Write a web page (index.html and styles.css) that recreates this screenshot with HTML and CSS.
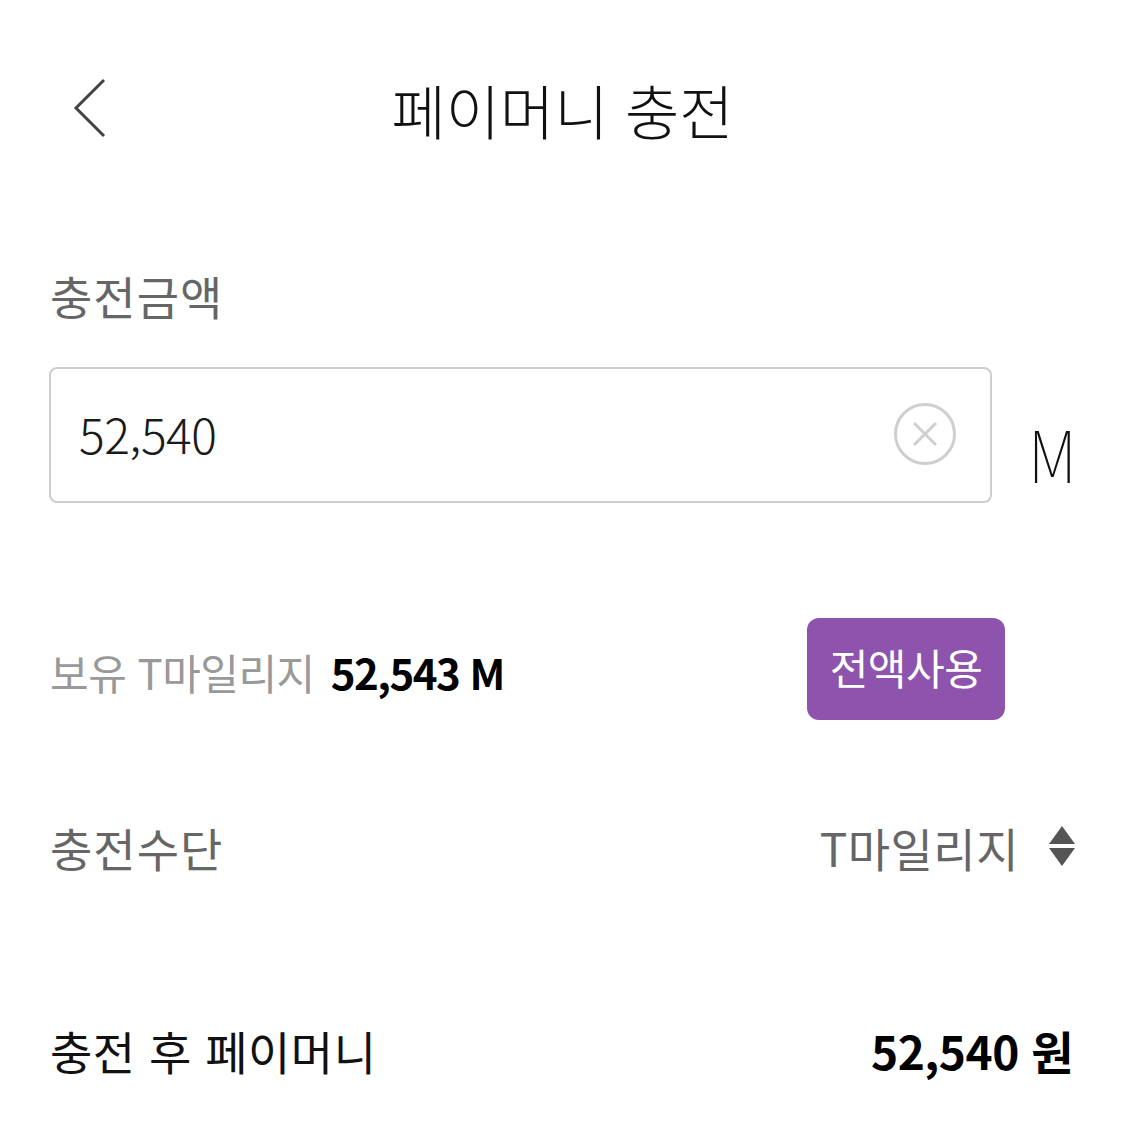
FILE: index.html
```html
<!DOCTYPE html>
<html lang="ko">
<head>
<meta charset="utf-8">
<title>페이머니 충전</title>
<link rel="stylesheet" href="styles.css">
</head>
<body>
<div class="page">
  <header class="header">
    <button class="back" aria-label="뒤로">
      <svg width="34" height="60" viewBox="0 0 34 60"><path d="M31 2 L3 30 L31 58" fill="none" stroke="#444" stroke-width="3"/></svg>
    </button>
    <h1 class="title">페이머니 충전</h1>
  </header>

  <section class="amount">
    <div class="label">충전금액</div>
    <div class="input-row">
      <div class="input-box">
        <span class="input-value">52,540</span>
        <svg class="clear" width="64" height="64" viewBox="0 0 64 64">
          <circle cx="32" cy="32" r="29.5" fill="none" stroke="#cfcfcf" stroke-width="3"/>
          <path d="M21 21 L43 43 M43 21 L21 43" stroke="#cfcfcf" stroke-width="3" fill="none"/>
        </svg>
      </div>
      <span class="unit">M</span>
    </div>
  </section>

  <section class="own-row">
    <div class="own">
      <span class="own-label">보유 T마일리지</span>
      <span class="own-value">52,543 M</span>
    </div>
    <button class="use-all">전액사용</button>
  </section>

  <section class="method-row">
    <span class="label">충전수단</span>
    <span class="method">
      <span class="method-name">T마일리지</span>
      <svg class="sort" width="26" height="42" viewBox="0 0 26 42"><path d="M13 0 L26 18 L0 18 Z M0 22 L26 22 L13 40 Z" fill="#555"/></svg>
    </span>
  </section>

  <section class="result-row">
    <span class="result-label">충전 후 페이머니</span>
    <span class="result-value">52,540 원</span>
  </section>
</div>
</body>
</html>
```

FILE: styles.css
```css
* { box-sizing: border-box; }
html, body { margin: 0; padding: 0; background: #fff; }
body {
  font-family: "Noto Sans CJK KR", "Noto Sans", sans-serif;
  color: #111;
  width: 1125px;
  height: 1125px;
  overflow: hidden;
}
.page { padding: 0 50px; }

.header {
  position: relative;
  height: 220px;
  display: flex;
  align-items: flex-start;
  justify-content: center;
}
.back {
  position: absolute;
  left: 23px;
  top: 78px;
  background: none;
  border: 0;
  padding: 0;
  width: 34px;
  height: 60px;
}
.back svg { display: block; }
.title {
  margin: 70px 0 0;
  font-size: 59px;
  font-weight: 300;
  line-height: 80px;
  letter-spacing: 0;
  color: #111;
}

.label {
  font-size: 46px;
  line-height: 60px;
  color: #666;
  font-weight: 400;
  letter-spacing: 1px;
}
.amount .label { margin-top: 45px; }

.input-row {
  display: flex;
  align-items: center;
  margin-top: 42px;
}
.input-box {
  flex-shrink: 0;
  width: 943px;
  height: 136px;
  margin-left: -1px;
  border: 2px solid #cdcdcd;
  border-radius: 8px;
  display: flex;
  align-items: center;
  justify-content: space-between;
  padding: 0 33px 0 28px;
}
.input-value {
  font-size: 48px;
  font-weight: 300;
  color: #1a1a1a;
  letter-spacing: -0.5px;
  margin-top: -4px;
}
.clear { display: block; margin-top: -2px; }
.unit {
  margin-left: 36px;
  font-size: 72px;
  font-weight: 100;
  line-height: 1;
  color: #111;
  margin-top: 34px;
  transform: scaleX(0.88);
  transform-origin: left center;
}

.own-row {
  display: flex;
  align-items: center;
  justify-content: space-between;
  margin-top: 115px;
  padding-right: 70px;
}
.own { display: flex; align-items: baseline; margin-top: 4px; }
.own-label {
  font-size: 42px;
  color: #999;
  letter-spacing: -0.5px;
}
.own-value {
  margin-left: 16px;
  font-size: 42px;
  font-weight: 700;
  color: #000;
  letter-spacing: -1.5px;
}
.use-all {
  width: 198px;
  height: 102px;
  border: 0;
  border-radius: 12px;
  background: #8d53ad;
  color: #fff;
  font-family: inherit;
  font-size: 42px;
  letter-spacing: -0.5px;
  padding: 0 0 6px;
}

.method-row {
  display: flex;
  align-items: center;
  justify-content: space-between;
  margin-top: 94px;
}
.method { display: flex; align-items: center; }
.method-name {
  font-size: 46px;
  color: #666;
  letter-spacing: 0.5px;
}
.sort { display: block; margin-left: 30px; margin-right: 0; }

.result-row {
  display: flex;
  align-items: center;
  justify-content: space-between;
  margin-top: 137px;
}
.result-label {
  font-size: 46px;
  color: #111;
  letter-spacing: 0.5px;
}
.result-value {
  font-size: 46px;
  font-weight: 700;
  color: #000;
  letter-spacing: -0.5px;
  margin-right: 2px;
}
```
